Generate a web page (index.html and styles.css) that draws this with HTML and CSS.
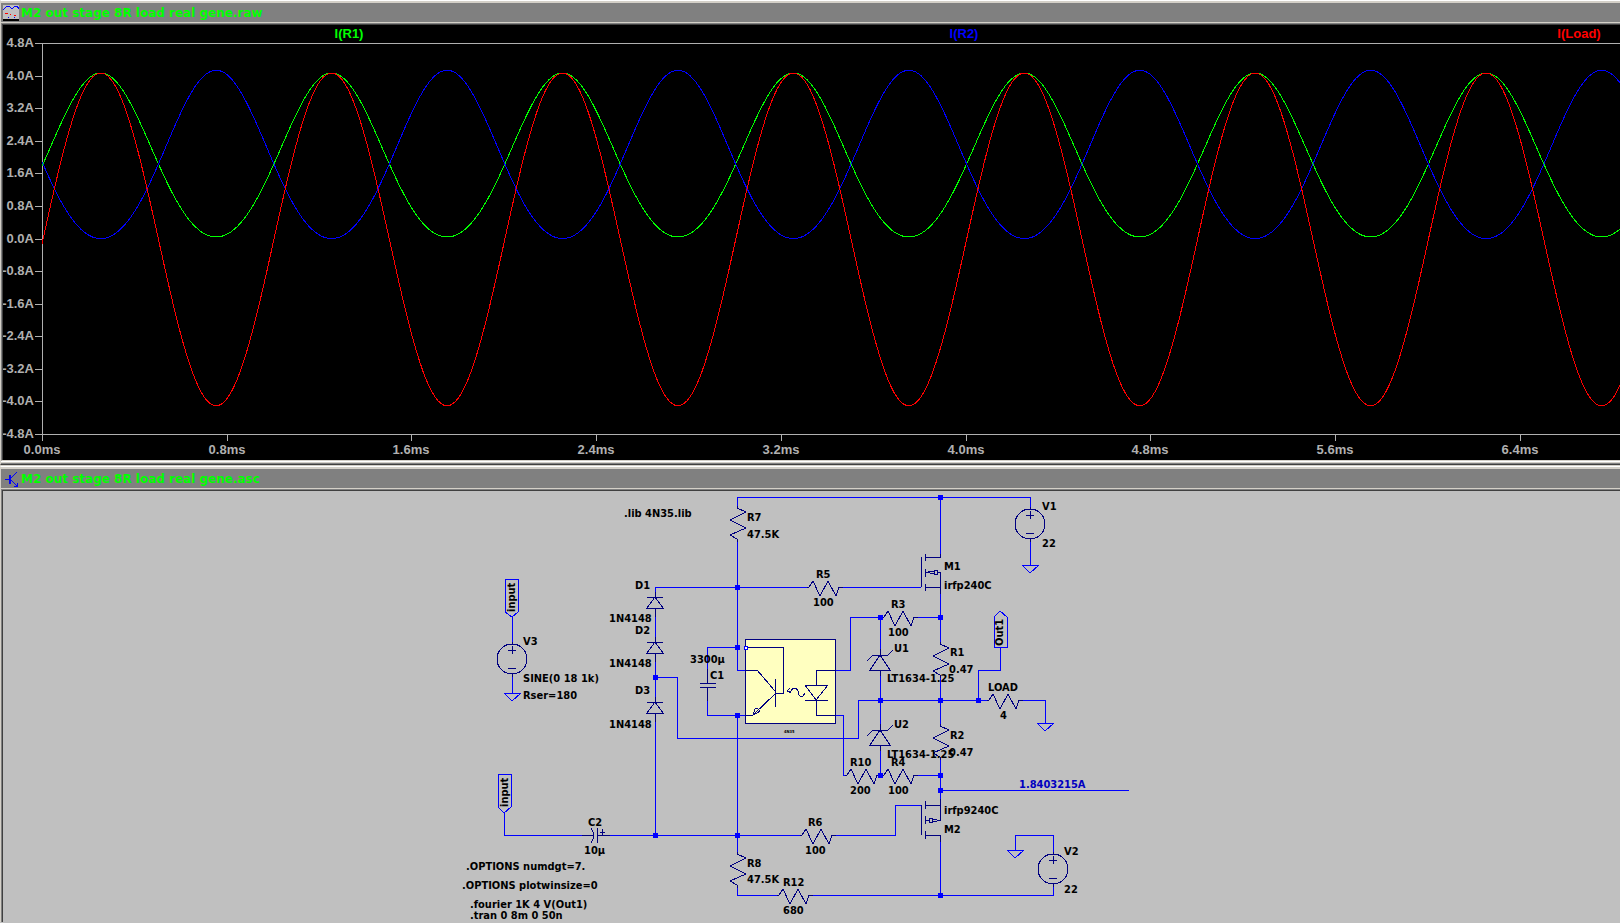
FILE: index.html
```html
<!DOCTYPE html>
<html lang="en">
<head>
<meta charset="utf-8">
<title>M2 out stage 8R load real gene</title>
<link rel="stylesheet" href="styles.css">
</head>
<body>
<main class="workspace">
  <section class="window">
    <header class="titlebar">
      <svg class="title-icon" viewBox="0 0 16 16" aria-hidden="true">
        <path class="icon-bg" d="M0 0h16v16H0z"/>
        <path class="icon-wave" d="M0 5l4 -4h2l3 3 3 -3h2l2 3M5 12h1M11 12h1"/>
        <path class="icon-red" d="M2 8h3M7 9h1M11 10h2"/>
        <path class="icon-axis" d="M0 15h16"/>
      </svg>
      <h1 class="title">M2 out stage 8R load real gene.raw</h1>
    </header>
    <div class="pane pane-plot">
      <svg class="plot" viewBox="3 25 1617 435" role="img" aria-label="Current waveforms">
        <path class="axis" d="M1620 43H42V441M42 434H1620"/>
        <path class="axis" d="M35 43h7M35 76h7M35 108h7M35 141h7M35 173h7M35 206h7M35 239h7M35 271h7M35 304h7M35 336h7M35 369h7M35 401h7M35 434h7"/>
        <path class="axis" d="M227 434v7M411 434v7M596 434v7M781 434v7M966 434v7M1150 434v7M1335 434v7M1520 434v7"/>
        <g class="scale scale-y">
          <text x="34" y="47">4.8A</text><text x="34" y="80">4.0A</text><text x="34" y="112">3.2A</text>
          <text x="34" y="145">2.4A</text><text x="34" y="177">1.6A</text><text x="34" y="210">0.8A</text>
          <text x="34" y="243">0.0A</text><text x="34" y="275">-0.8A</text><text x="34" y="308">-1.6A</text>
          <text x="34" y="340">-2.4A</text><text x="34" y="373">-3.2A</text><text x="34" y="405">-4.0A</text>
          <text x="34" y="438">-4.8A</text>
        </g>
        <g class="scale scale-x">
          <text x="42" y="454">0.0ms</text><text x="227" y="454">0.8ms</text><text x="411" y="454">1.6ms</text>
          <text x="596" y="454">2.4ms</text><text x="781" y="454">3.2ms</text><text x="966" y="454">4.0ms</text>
          <text x="1150" y="454">4.8ms</text><text x="1335" y="454">5.6ms</text><text x="1520" y="454">6.4ms</text>
        </g>
        <g class="legend">
          <text class="legend-r1" x="349" y="38">I(R1)</text>
          <text class="legend-r2" x="964" y="38">I(R2)</text>
          <text class="legend-load" x="1579" y="38">I(Load)</text>
        </g>
        <path class="trace trace-r1" id="trace-r1"/>
        <path class="trace trace-r2" id="trace-r2"/>
        <path class="trace trace-load" id="trace-load"/>
      </svg>
    </div>
  </section>

  <section class="window window-schematic">
    <header class="titlebar">
      <svg class="title-icon" viewBox="0 0 16 16" aria-hidden="true">
        <path class="icon-bjt" d="M2 8h5M8 7l6 -6M8 9l6 6M11 15h3v-3"/>
        <path class="icon-bjt-bar" d="M6 4h2v9H6z"/>
      </svg>
      <h2 class="title">M2 out stage 8R load real gene.asc</h2>
    </header>
    <div class="pane pane-schematic">
      <svg class="schematic" viewBox="3 492 1617 431" role="img" aria-label="Output stage schematic">
        <defs>
          <path id="res-h" d="M0 0H2L6 -6L13 9L21 -6L29 9L32 0H36"/>
          <path id="res-v" d="M0 0V2L9 6L-7 14L9 22L-7 29L0 33V36"/>
          <path id="diode" d="M0 -5V0M-8 0H8M0 0L-8 11H8L0 0M0 11V20"/>
          <path id="zener" d="M0 -6V0M-13 6L-7 0H8L13 -5M0 0L-10 15H10L0 0M0 15V21"/>
          <path id="ground" d="M-8 0H9L0 8L-8 0"/>
          <g id="source"><circle r="15"/><path d="M-4 -9H4M0 -13V-5M-4 9H4M0 -17V-15M0 15V18"/></g>
          <path id="node" d="M-2 -2h5v5h-5z"/>
        </defs>

        <rect class="opto" x="745" y="640" width="90" height="84"/>

        <g class="wire">
          <path d="M737 507V498H1030V508M940 498V555M737 543V671H745M655 593V588H807M843 588H921"/>
          <path d="M655 618V638M655 663V698M655 678H677V739H858V701H987M655 723V836"/>
          <path d="M737 648H707V670M707 702V716H745M737 716V853M737 889V896H777M813 896H1053V888"/>
          <path d="M880 650V618H850V671H836M836 716H843V776H845M880 618H883M918 618H940M940 595V643M940 679V725M940 761V800"/>
          <path d="M880 677V725M880 752V776M918 776H940M978 701V671H1000V648M1023 701H1045V724"/>
          <path d="M940 843V896M940 791H1129M1030 543V566M512 618V643M512 678V694"/>
          <path d="M504 814V836H582M610 836H800M836 836H895V806H921M1053 853V836H1015V851"/>
          <path d="M505 580H518V613L512 618L505 613ZM498 775H511V808L504 814L498 808ZM994 648V618L1000 612L1007 618V648Z"/>
          <use href="#ground" x="1030" y="566"/><use href="#ground" x="512" y="694"/>
          <use href="#ground" x="1045" y="724"/><use href="#ground" x="1015" y="851"/>
        </g>

        <g class="part">
          <use href="#res-v" x="737" y="507"/><use href="#res-v" x="737" y="853"/>
          <use href="#res-v" x="940" y="643"/><use href="#res-v" x="940" y="725"/>
          <use href="#res-h" x="807" y="588"/><use href="#res-h" x="882" y="618"/>
          <use href="#res-h" x="845" y="776"/><use href="#res-h" x="882" y="776"/>
          <use href="#res-h" x="800" y="836"/><use href="#res-h" x="777" y="896"/>
          <use href="#res-h" x="987" y="701"/>
          <use href="#diode" x="655" y="598"/><use href="#diode" x="655" y="643"/><use href="#diode" x="655" y="703"/>
          <use href="#zener" x="880" y="656"/><use href="#zener" x="880" y="731"/>
          <use href="#source" x="1030" y="525"/><use href="#source" x="512" y="660"/><use href="#source" x="1053" y="870"/>
          <path d="M707 670V684M700 684H716M700 688H716M707 688V702"/>
          <path d="M582 836H593M591 829L593 833V840L591 844M597 829V844M597 836H610M600 833H605M602 830V836"/>
          <path d="M921 558V588M925 555V562M925 570V578M925 585V592M925 558H940V555M925 588H940M925 573H928M928 573L930 572H934M928 573L930 574H934M934 571H937V575H934ZM937 573H940V595"/>
          <path d="M921 806V836M925 802V810M925 817V825M925 832V840M925 806H940M925 836H940V843M925 821H929M929 819H932V823H929ZM932 820H937M932 822H937M937 821H940V800"/>
          <path d="M747 648H783V694H775M775 680V708M745 671H757L775 692M775 695L753 716H745M753 716L755 710L757 709L760 712L757 714Z"/>
          <path d="M836 671H816V686M805 686H828L816 701ZM805 701H828M816 701V716H836"/>
          <path d="M787 692L790 689M787 692L791 694M787 692H791L793 689H796L798 692V695L800 697H803L805 694"/>
        </g>
        <rect class="pin" x="744" y="647" width="3" height="3"/>

        <g class="nodes">
          <use href="#node" x="737" y="588"/><use href="#node" x="737" y="648"/><use href="#node" x="737" y="716"/>
          <use href="#node" x="737" y="836"/><use href="#node" x="655" y="678"/><use href="#node" x="655" y="836"/>
          <use href="#node" x="940" y="498"/><use href="#node" x="940" y="618"/><use href="#node" x="940" y="701"/>
          <use href="#node" x="940" y="776"/><use href="#node" x="940" y="791"/><use href="#node" x="940" y="896"/>
          <use href="#node" x="880" y="618"/><use href="#node" x="880" y="701"/><use href="#node" x="880" y="776"/>
          <use href="#node" x="978" y="701"/>
        </g>

        <g class="label" transform="translate(0 1)">
          <text x="624" y="517">.lib 4N35.lib</text>
          <text x="747" y="521">R7</text><text x="747" y="538">47.5K</text>
          <text x="816" y="578">R5</text><text x="813" y="606">100</text>
          <text x="635" y="589">D1</text><text x="609" y="622">1N4148</text>
          <text x="635" y="634">D2</text><text x="609" y="667">1N4148</text>
          <text x="635" y="694">D3</text><text x="609" y="728">1N4148</text>
          <text x="523" y="645">V3</text><text x="523" y="682">SINE(0 18 1k)</text><text x="523" y="699">Rser=180</text>
          <text x="588" y="826">C2</text><text x="584" y="854">10µ</text>
          <text x="466" y="870">.OPTIONS numdgt=7.</text>
          <text x="462" y="889">.OPTIONS plotwinsize=0</text>
          <text x="470" y="908">.fourier 1K 4 V(Out1)</text>
          <text x="470" y="919">.tran 0 8m 0 50n</text>
          <text x="690" y="663">3300µ</text><text x="710" y="679">C1</text>
          <text x="1042" y="510">V1</text><text x="1042" y="547">22</text>
          <text x="944" y="570">M1</text><text x="944" y="589">irfp240C</text>
          <text x="891" y="608">R3</text><text x="888" y="636">100</text>
          <text x="894" y="652">U1</text><text x="887" y="682">LT1634-1.25</text>
          <text x="950" y="656">R1</text><text x="949" y="673">0.47</text>
          <text x="988" y="691">LOAD</text><text x="1000" y="719">4</text>
          <text x="894" y="728">U2</text><text x="887" y="758">LT1634-1.25</text>
          <text x="950" y="739">R2</text><text x="949" y="756">0.47</text>
          <text x="850" y="766">R10</text><text x="850" y="794">200</text>
          <text x="891" y="766">R4</text><text x="888" y="794">100</text>
          <text x="944" y="814">irfp9240C</text><text x="944" y="833">M2</text>
          <text x="1064" y="855">V2</text><text x="1064" y="893">22</text>
          <text x="747" y="867">R8</text><text x="747" y="883">47.5K</text>
          <text x="783" y="886">R12</text><text x="783" y="914">680</text>
          <text x="808" y="826">R6</text><text x="805" y="854">100</text>
          <text class="probe" x="1019" y="788">1.8403215A</text>
          <text class="tiny" x="784" y="733">4N35</text>
          <text transform="translate(515 612) rotate(-90)">input</text>
          <text transform="translate(508 807) rotate(-90)">input</text>
          <text transform="translate(1003 646) rotate(-90)">Out1</text>
        </g>
      </svg>
    </div>
  </section>
</main>
<script src="script.js"></script>
</body>
</html>
```
FILE: styles.css
```css
body {
  margin: 0;
  overflow: hidden;
  background: #c0c0c0;
  font-family: "DejaVu Sans", sans-serif;
}

.workspace {
  display: flex;
  flex-direction: column;
}

.window {
  border-top: 1px solid #ffffff;
  border-left: 1px solid #d4d0c8;
  border-bottom: 1px solid #404040;
  box-shadow: inset 0 -1px #808080;
  padding-bottom: 1px;
  background: #d4d0c8;
}

.window-schematic {
  margin-top: 1px;
  border-bottom: 0;
  padding-bottom: 0;
  background: #c0c0c0;
  box-shadow: 0 -1px #d4d0c8;
}

.titlebar {
  display: flex;
  align-items: center;
  gap: 2px;
  height: 19px;
  padding-left: 2px;
  border-top: 2px solid #d4d0c8;
  border-bottom: 1px solid #d4d0c8;
  background: #808080;
}

.title {
  margin: 0;
  color: #00ff00;
  font-size: 12px;
  font-weight: 700;
  line-height: 18px;
  white-space: nowrap;
}

.title-icon {
  flex: none;
  width: 16px;
  height: 16px;
  fill: none;
  shape-rendering: crispEdges;
}

.icon-bg { fill: #c0c0c0; }
.icon-wave { stroke: #0000ff; }
.icon-red { stroke: #ff0000; }
.icon-axis { stroke: #000000; stroke-width: 2; }
.icon-bjt { stroke: #0000ff; }
.icon-bjt-bar { fill: #0000ff; }

.pane {
  padding: 1px 0 0 1px;
  border-top: 1px solid #808080;
  border-left: 1px solid #808080;
  background: #404040;
}

.pane-plot {
  margin-bottom: 2px;
  border-bottom: 1px solid #d4d0c8;
  box-shadow: 0 1px #ffffff;
}

.plot,
.schematic {
  display: block;
  width: 100%;
  height: auto;
  fill: none;
  shape-rendering: crispEdges;
}

.plot { background: #000000; }
.schematic { background: #c0c0c0; }

.axis { stroke: #b0b0b0; }

.scale,
.legend {
  font-family: "Liberation Sans", sans-serif;
  font-size: 13px;
  font-weight: 700;
}

.scale { fill: #b0b0b0; }
.scale-y { text-anchor: end; }
.scale-x,
.legend { text-anchor: middle; }

.legend-r1 { fill: #00ff00; }
.legend-r2 { fill: #0000ff; }
.legend-load { fill: #ff0000; }

.trace-r1 { stroke: #00ff00; }
.trace-r2 { stroke: #0000ff; }
.trace-load { stroke: #ff0000; }

.wire { stroke: #0000ff; }
.part { stroke: #000080; }
.nodes { fill: #0000ff; }
.opto { fill: #ffffc0; stroke: #000080; }
.pin { fill: #ffffff; stroke: #0000ff; }

.label {
  fill: #000000;
  font-family: "DejaVu Sans Condensed", "DejaVu Sans", sans-serif;
  font-size: 11px;
  font-weight: 700;
}

.probe { fill: #0000c0; }
.tiny { font-size: 4px; }
```
FILE: script.js
```js
const PERIOD = 230.9;
const ORIGIN = 43;
const START = 42;
const END = 1620;

// Each trace is a fundamental plus a small second harmonic.
const traces = {
  'trace-r1': { mid: 159.5, amp: -82, second: 4.5 },
  'trace-r2': { mid: 159.2, amp: 84.2, second: 4.8 },
  'trace-load': { mid: 239.4, amp: -166.4, second: 0 }
};

for (const [id, t] of Object.entries(traces)) {
  const points = [];
  for (let x = START; x <= END; x += 3) {
    const phase = (x - ORIGIN) / PERIOD * 2 * Math.PI;
    const y = t.mid + t.amp * Math.sin(phase) + t.second * Math.cos(2 * phase);
    points.push(x + ' ' + y.toFixed(1));
  }
  document.getElementById(id).setAttribute('d', 'M' + points.join('L'));
}
```
